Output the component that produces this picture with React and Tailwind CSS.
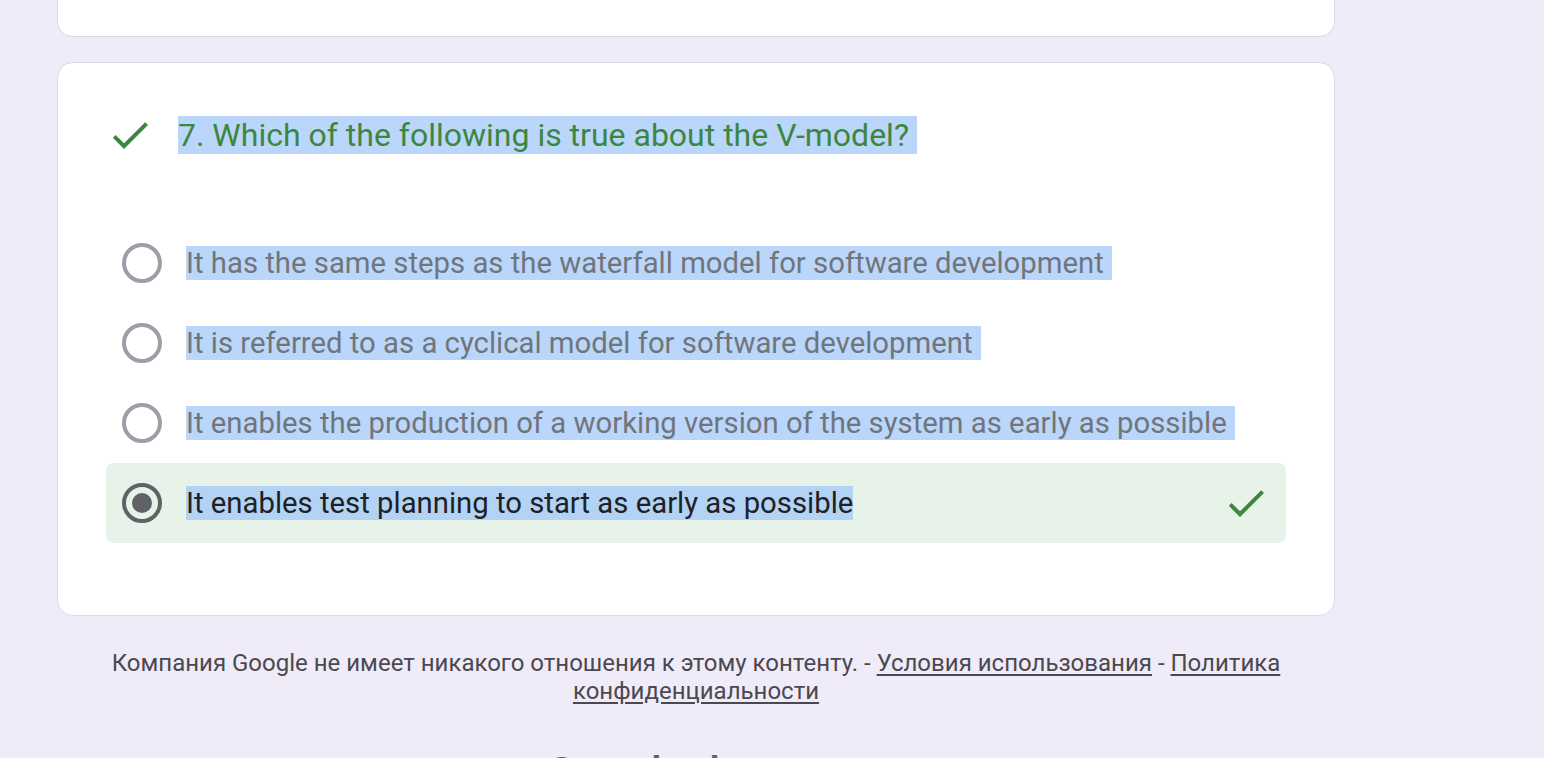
import React from "react";

const CheckIcon = ({ className }) => (
  <svg viewBox="0 0 24 24" className={className} fill="currentColor">
    <path d="M9 16.17L4.83 12l-1.42 1.41L9 19 21 7l-1.41-1.41z" />
  </svg>
);

const options = [
  "It has the same steps as the waterfall model for software development",
  "It is referred to as a cyclical model for software development",
  "It enables the production of a working version of the system as early as possible",
];

export default function App() {
  return (
    <div className="h-[758px] overflow-hidden bg-[#f0ebf8] font-['Roboto',sans-serif]">
      <div className="ml-[57px] w-[1278px]">
        <div className="h-[37px] rounded-b-[16px] border border-t-0 border-[#dadce0] bg-white" />
        <div className="mt-[25px] rounded-[16px] border border-[#dadce0] bg-white px-[48px] pt-[48px] pb-[72px]">
          <div className="flex items-center">
            <CheckIcon className="h-[48px] w-[48px] shrink-0 text-[#3b873e]" />
            <div className="ml-[24px] text-[32px] leading-[48px] text-[#3b873e]">
              <span className="bg-[#bbd6fb] pr-[8px]">
                7. Which of the following is true about the V-model?
              </span>
            </div>
          </div>
          <div className="mt-[64px] flex flex-col">
            {options.map((o) => (
              <div key={o} className="flex h-[80px] items-center pl-[16px]">
                <div className="h-[40px] w-[40px] shrink-0 rounded-full border-[4px] border-[#9aa0a6]" />
                <div className="ml-[24px] whitespace-nowrap text-[29.3px] leading-[40px] text-[#71757a]">
                  <span className="bg-[#bbd6fb] pr-[8px]">{o}</span>
                </div>
              </div>
            ))}
            <div className="flex h-[80px] items-center rounded-[8px] bg-[#e7f3e9] pl-[16px] pr-[16px]">
              <div className="flex h-[40px] w-[40px] shrink-0 items-center justify-center rounded-full border-[4px] border-[#5f6368]">
                <div className="h-[20px] w-[20px] rounded-full bg-[#5f6368]" />
              </div>
              <div className="ml-[24px] flex-1 text-[29.3px] leading-[40px] text-[#202124]">
                <span className="bg-[#b3d3f5]">It enables test planning to start as early as possible</span>
              </div>
              <CheckIcon className="h-[48px] w-[48px] shrink-0 text-[#3b873e]" />
            </div>
          </div>
        </div>
        <div className="mt-[33px] px-[40px] text-center text-[24px] leading-[28px] text-[#4a4950]">
          Компания Google не имеет никакого отношения к этому контенту. -{" "}
          <span className="underline underline-offset-[3px]">Условия использования</span> -{" "}
          <span className="underline underline-offset-[3px]">Политика конфиденциальности</span>
        </div>
        <div className="mt-[43px] flex justify-start pl-[490px]">
          <div className="text-[42px] leading-[50px] font-medium tracking-[1px] text-[#5f6368]">Google Формы</div>
        </div>
      </div>
    </div>
  );
}
